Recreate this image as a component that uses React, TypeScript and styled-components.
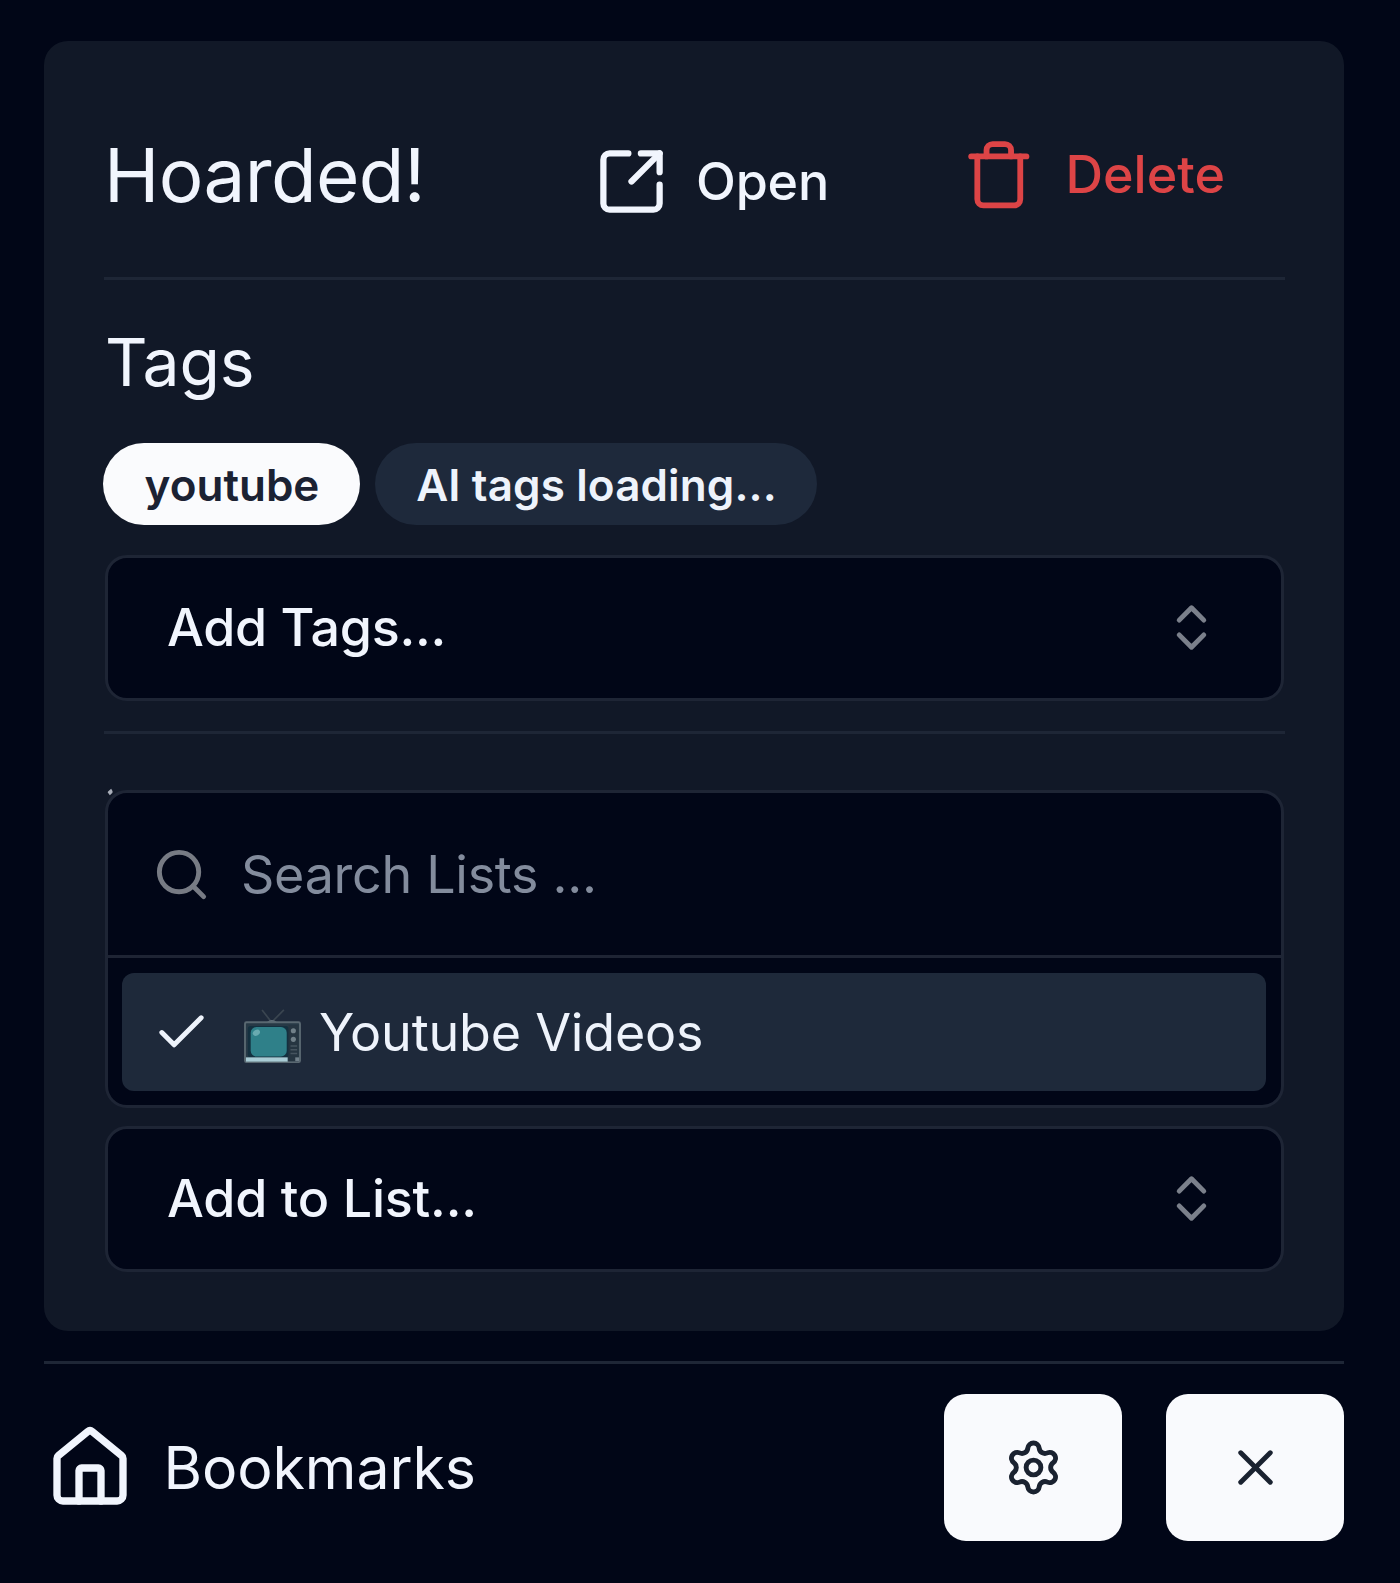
import React from "react";
import styled, { createGlobalStyle } from "styled-components";
import {
  SquareArrowOutUpRight,
  Trash,
  ChevronsUpDown,
  Search,
  Check,
  Settings,
  X,
} from "lucide-react";

const GlobalStyle = createGlobalStyle`
  * { box-sizing: border-box; }
  body {
    margin: 0;
    background: #010617;
    color: #f1f5fd;
    font-family: Inter, "Liberation Sans", sans-serif;
    font-optical-sizing: none;
  }
  svg { display: block; flex: none; }
`;

const Popup = styled.main`
  width: 1400px;
  height: 1583px;
  padding: 41px 56px 0 44px;
  background: #010617;
`;

const Card = styled.section`
  height: 1290px;
  padding: 59px 59px 0 60px;
  border-radius: 24px;
  background: #111827;
`;

const Header = styled.header`
  display: flex;
  align-items: center;
  height: 151px;
`;

const Label = styled.span<{ $size: number; $weight?: number; $spacing?: number }>`
  font-size: ${(p) => p.$size}px;
  font-weight: ${(p) => p.$weight ?? 400};
  letter-spacing: ${(p) => p.$spacing ?? 0}px;
  line-height: 1.25;
  white-space: nowrap;
`;

const Title = styled.h1`
  width: 490px;
  margin: 0;
  padding-top: 1px;
  font-size: 74.5px;
  font-weight: 400;
  letter-spacing: -0.6px;
  line-height: 1.25;
  white-space: nowrap;
`;

const Action = styled.button<{ $danger?: boolean }>`
  display: flex;
  align-items: center;
  gap: ${(p) => (p.$danger ? 30 : 27)}px;
  margin: ${(p) => (p.$danger ? "-2px 0 0 auto" : "12px 0 0")};
  padding: 0 ${(p) => (p.$danger ? 60 : 0)}px 0 0;
  border: 0;
  background: none;
  font-family: inherit;
  color: ${(p) => (p.$danger ? "#dd4446" : "#f1f5fd")};
`;

const Rule = styled.hr<{ $top: number }>`
  height: 3px;
  margin: ${(p) => p.$top}px 0 0;
  border: 0;
  background: #1e2636;
`;

const SectionTitle = styled.h2`
  height: 99px;
  margin: 33px 0 0;
  padding-left: 1px;
  font-size: 66px;
  font-weight: 400;
  letter-spacing: -0.2px;
  line-height: 99px;
`;

const Badges = styled.div`
  display: flex;
  gap: 15px;
  margin: 31px 0 0 -1px;
`;

const Badge = styled.span<{ $solid?: boolean; $width: number }>`
  display: flex;
  align-items: center;
  justify-content: center;
  width: ${(p) => p.$width}px;
  height: 82px;
  padding: 2px 0 0 1px;
  border-radius: 41px;
  background: ${(p) => (p.$solid ? "#fafbfd" : "#1e293b")};
  color: ${(p) => (p.$solid ? "#1b2233" : "#eef3fb")};
`;

const Combobox = styled.button<{ $top: number }>`
  display: flex;
  align-items: center;
  justify-content: space-between;
  width: 1179px;
  height: 146px;
  margin: ${(p) => p.$top}px 0 0 1px;
  padding: 0 60px 2px 59px;
  border: 3px solid #1e2535;
  border-radius: 22px;
  background: #010617;
  color: #f1f5fd;
  font-family: inherit;
`;

const ListMenu = styled.div`
  position: relative;
  width: 1179px;
  height: 318px;
  margin: 56px 0 0 1px;
  border: 3px solid #1e2535;
  border-radius: 22px;
  background: #010617;

  &::before {
    content: "";
    position: absolute;
    top: -3px;
    left: 0;
    width: 5px;
    height: 4px;
    border-radius: 1px 0 3px 0;
    background: #a9aeb9;
    transform: rotate(-40deg);
  }
`;

const SearchRow = styled.div`
  display: flex;
  align-items: center;
  gap: 30px;
  height: 165px;
  padding: 0 44px;
  border-bottom: 3px solid #1e2434;
  color: #838c9d;
`;

const ListItem = styled.div`
  display: flex;
  align-items: center;
  height: 118px;
  margin: 15px 15px 0 14px;
  padding-left: 30px;
  border-radius: 12px;
  background: #1e293a;
  color: #eef3fb;
`;

const Footer = styled.footer`
  display: flex;
  align-items: center;
  height: 147px;
  margin-top: 30px;
`;

const HomeLink = styled.a`
  display: flex;
  align-items: center;
  gap: 30px;
  margin-right: auto;
  padding-left: 1.5px;
`;

const SquareButton = styled.button`
  display: flex;
  align-items: center;
  justify-content: center;
  width: 178px;
  height: 147px;
  margin-left: 44px;
  border: 0;
  border-radius: 22px;
  background: #f9fafd;
  color: #1a2230;
`;

const HomeIcon = () => (
  <svg
    width="88"
    height="88"
    viewBox="0 0 24 24"
    fill="none"
    stroke="currentColor"
    strokeWidth="2"
    strokeLinecap="round"
    strokeLinejoin="round"
  >
    <path d="M3 9.4a1 1 0 0 1 .37-.78l8-6.55a1 1 0 0 1 1.26 0l8 6.55a1 1 0 0 1 .37.78V19.4a1.6 1.6 0 0 1-1.6 1.6H4.6A1.6 1.6 0 0 1 3 19.4z" />
    <path d="M15 21v-8.3a.7.7 0 0 0-.7-.7H9.7a.7.7 0 0 0-.7.7V21" />
  </svg>
);

const TelevisionArt = styled.svg`
  margin: 8px 18px 0 33px;
`;

const Television = () => (
  <TelevisionArt width="57" height="55" viewBox="0 0 60 58">
    <path d="M19 1 29 14 42 1" fill="none" stroke="#3a4550" strokeWidth="1.8" />
    <path d="M24 14q5-5 11 0z" fill="#63717b" />
    <rect x="1" y="14" width="58" height="42" rx="1.5" fill="#273946" stroke="#5a6871" strokeWidth="2" />
    <rect x="4" y="18" width="43" height="33" rx="3" fill="#14303f" />
    <rect x="7" y="19" width="38" height="31" rx="6" fill="#2f8089" />
    <ellipse cx="13" cy="25" rx="4" ry="3" fill="#69aab0" transform="rotate(-30 13 25)" />
    <rect x="2" y="51" width="44" height="4.5" fill="#a9ccd5" />
    <rect x="47" y="17" width="10" height="38" fill="#263541" />
    <circle cx="52" cy="23" r="2.7" fill="#718089" />
    <circle cx="52" cy="32" r="2.7" fill="#718089" />
    <path d="M49 39h7M49 43h7M49 47h7" stroke="#46545f" strokeWidth="1.6" />
    <rect x="54" y="51" width="4" height="4" fill="#71808a" />
  </TelevisionArt>
);

export default function App() {
  return (
    <>
      <GlobalStyle />
      <Popup>
        <Card>
          <Header>
            <Title>Hoarded!</Title>
            <Action>
              <SquareArrowOutUpRight size={75} />
              <Label $size={52} $weight={500} $spacing={-0.2}>Open</Label>
            </Action>
            <Action $danger>
              <Trash size={73.6} strokeWidth={1.9} />
              <Label $size={52} $weight={500}>Delete</Label>
            </Action>
          </Header>
          <Rule $top={26} />
          <SectionTitle>Tags</SectionTitle>
          <Badges>
            <Badge $solid $width={257}>
              <Label $size={44} $weight={600}>youtube</Label>
            </Badge>
            <Badge $width={442}>
              <Label $size={44} $weight={600} $spacing={0.12}>AI tags loading...</Label>
            </Badge>
          </Badges>
          <Combobox $top={30}>
            <Label $size={52} $weight={500} $spacing={-0.25}>Add Tags...</Label>
            <ChevronsUpDown size={59} color="#7b808b" />
          </Combobox>
          <Rule $top={30} />
          <ListMenu>
            <SearchRow>
              <Search size={59} color="#777b84" />
              <Label $size={52} $spacing={-0.28}>Search Lists ...</Label>
            </SearchRow>
            <ListItem>
              <Check size={59} />
              <Television />
              <Label $size={52} $spacing={-0.2}>Youtube Videos</Label>
            </ListItem>
          </ListMenu>
          <Combobox $top={18}>
            <Label $size={52} $weight={500} $spacing={-0.2}>Add to List...</Label>
            <ChevronsUpDown size={59} color="#7b808b" />
          </Combobox>
        </Card>
        <Rule $top={30} />
        <Footer>
          <HomeLink>
            <HomeIcon />
            <Label $size={59} $spacing={-0.1}>Bookmarks</Label>
          </HomeLink>
          <SquareButton aria-label="Settings">
            <Settings size={59} />
          </SquareButton>
          <SquareButton aria-label="Close">
            <X size={59} />
          </SquareButton>
        </Footer>
      </Popup>
    </>
  );
}
